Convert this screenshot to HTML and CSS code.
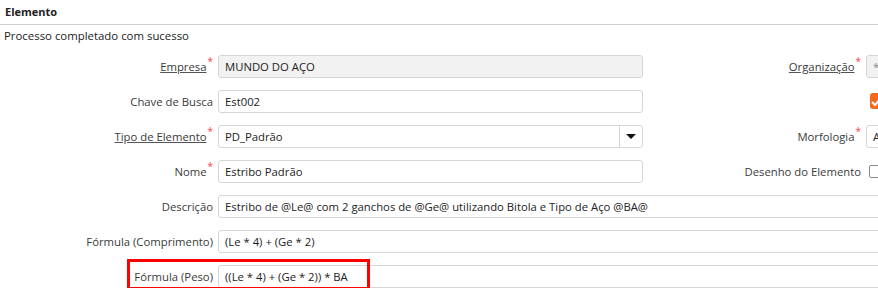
FILE: index.html
```html
<!DOCTYPE html>
<html lang="pt">
<head>
  <meta charset="UTF-8">
  <title>Elemento</title>
  <link rel="stylesheet" href="styles.css">
</head>
<body>
  <div class="panel">
    <div class="panelTitle">Elemento</div>
    <div class="status">Processo completado com sucesso</div>

    <div class="form">
      <label class="lbl"><u>Empresa</u><span class="req">*</span></label>
      <div class="field readonly">MUNDO DO AÇO</div>
      <label class="lbl"><u>Organização</u><span class="req">*</span></label>
      <div class="field readonly muted">*</div>

      <label class="lbl">Chave de Busca</label>
      <div class="field">Est002</div>
      <label class="lbl"></label>
      <div class="check">
        <span class="box on">
          <svg width="16" height="16" viewBox="0 0 16 16"><path d="M2 9 L5 12 L12 4" fill="none" stroke="#fff" stroke-width="2"/></svg>
        </span>
      </div>

      <label class="lbl"><u>Tipo de Elemento</u><span class="req">*</span></label>
      <div class="field select">
        <span class="val">PD_Padrão</span>
        <span class="arrow"></span>
      </div>
      <label class="lbl">Morfologia<span class="req">*</span></label>
      <div class="field">A</div>

      <label class="lbl">Nome<span class="req">*</span></label>
      <div class="field">Estribo Padrão</div>
      <label class="lbl">Desenho do Elemento</label>
      <div class="check"><span class="box"></span></div>

      <label class="lbl">Descrição</label>
      <div class="field wide">Estribo de @Le@ com 2 ganchos de @Ge@ utilizando Bitola e Tipo de Aço @BA@</div>

      <label class="lbl">Fórmula (Comprimento)</label>
      <div class="field wide">(Le * 4) + (Ge * 2)</div>

      <label class="lbl">Fórmula (Peso)</label>
      <div class="field wide">((Le * 4) + (Ge * 2)) * BA</div>
    </div>

    <!-- marcação em vermelho -->
    <div class="highlight"></div>
  </div>
</body>
</html>
```

FILE: styles.css
```css
body {
  margin: 0;
  font-family: "Open Sans", "Noto Sans", sans-serif;
  font-size: 11.3px;
  color: #222;
  overflow: hidden;
  background: #fff;
}
.panel {
  position: relative;
  width: 1000px;
}
.panelTitle {
  font-weight: bold;
  font-size: 11px;
  height: 24px;
  line-height: 24px;
  padding-left: 5px;
  border-bottom: 1px solid #cfcfcf;
}
.status {
  font-size: 11.4px;
  padding: 2px 4px 0;
  height: 28px;
  line-height: 18px;
}
.form {
  display: grid;
  grid-template-columns: 213px 425px 213px 120px;
  grid-auto-rows: 23px;
  column-gap: 5px;
  row-gap: 12px;
}
.lbl {
  color: #3a3a3a;
  text-align: right;
  line-height: 23px;
  white-space: nowrap;
}
.lbl u {
  text-decoration-color: #555;
}
.req {
  color: #f44;
  font-size: 10px;
  vertical-align: top;
  line-height: 12px;
  margin-left: 1px;
}
.field {
  border: 1px solid #d6d6d6;
  border-radius: 3px;
  padding: 0 6px;
  line-height: 21px;
  white-space: nowrap;
  overflow: hidden;
  background: #fff;
}
.field.readonly {
  background: #f2f2f2;
}
.field.muted {
  color: #888;
}
.field.wide {
  grid-column: 2 / 5;
}
.select {
  display: flex;
  padding-right: 0;
}
.select .val {
  flex: 1;
}
.select .arrow {
  width: 22px;
  border-left: 1px solid #d6d6d6;
  position: relative;
}
.select .arrow::after {
  content: "";
  position: absolute;
  left: 6px;
  top: 8px;
  border-left: 5px solid transparent;
  border-right: 5px solid transparent;
  border-top: 5px solid #111;
}
.check {
  display: flex;
  align-items: center;
  padding-left: 3px;
}
.box {
  width: 11px;
  height: 11px;
  border: 1px solid #8a8a8a;
  border-radius: 2px;
  background: #fff;
}
.box.on {
  display: block;
  width: 16px;
  height: 16px;
  border: none;
  border-radius: 3px;
  background: #f26a1b;
  margin-top: -2px;
  margin-left: 1px;
}
.box svg {
  display: block;
}
.highlight {
  position: absolute;
  left: 127px;
  top: 259px;
  width: 237px;
  height: 25px;
  border: 3px solid #f00;
}
```
